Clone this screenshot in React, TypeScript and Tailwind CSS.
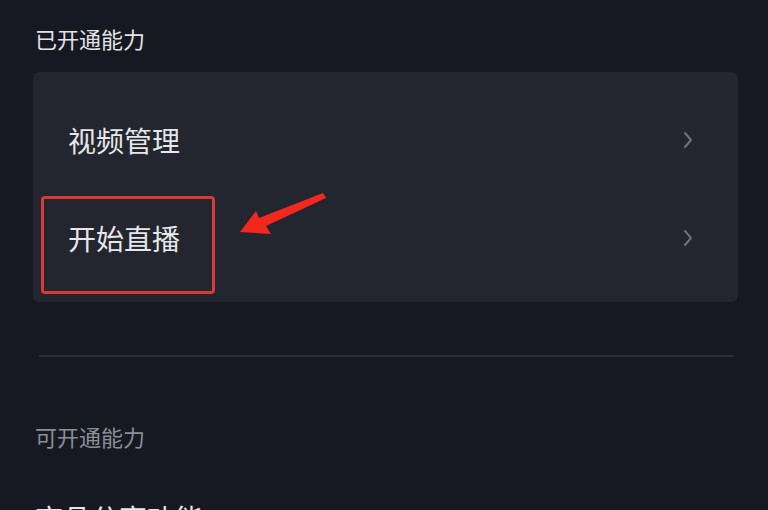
const Chevron = () => (
  <svg width="12" height="20" viewBox="0 0 12 20" fill="none">
    <path d="M3 3l6 7-6 7" stroke="#6d7078" strokeWidth="2" strokeLinecap="round" strokeLinejoin="round" />
  </svg>
);

const Row = ({ label, highlight }: { label: string; highlight?: boolean }) => (
  <div className="relative flex h-[98px] items-center justify-between pl-[35px] pr-[44px]">
    {highlight && (
      <div className="absolute left-[8px] top-[7px] h-[98px] w-[174px] rounded-[4px] border-[3px] border-[#d63b38]" />
    )}
    <span className="text-[28px] leading-[40px] text-[#e6e7e9]">{label}</span>
    <Chevron />
  </div>
);

export default function App() {
  return (
    <div
      className="h-[510px] w-[768px] overflow-hidden bg-[#161922] px-[33px] pt-[23px]"
      style={{ fontFamily: '"Noto Sans CJK SC", "Noto Sans", sans-serif' }}
    >
      <div className="pl-[2px] text-[22px] leading-[30px] text-[#e2e3e5]">已开通能力</div>

      <div className="relative mt-[19px] w-[705px] rounded-[6px] bg-[#23262f] pb-[15px] pt-[19px]">
        <Row label="视频管理" />
        <Row label="开始直播" highlight />
        {/* annotation arrow pointing at the highlighted row */}
        <svg className="absolute left-[200px] top-[115px]" width="130" height="55" viewBox="200 115 130 55">
          <polygon
            points="207,160 223,139 226,146 290,121 293,126 233,154 238,162"
            fill="#f2281e"
          />
        </svg>
      </div>

      <div className="ml-[6px] mt-[53px] h-[2px] w-[695px] bg-[#2a2e37]" />

      <div className="mt-[64px] pl-[2px] text-[22px] leading-[30px] text-[#8b8e95]">可开通能力</div>

      <div className="mt-[47px] flex items-center justify-between pl-[2px] pr-[3px]">
        <span className="text-[28px] leading-[40px] text-[#e6e7e9]">商品分享功能</span>
        <Chevron />
      </div>
    </div>
  );
}
